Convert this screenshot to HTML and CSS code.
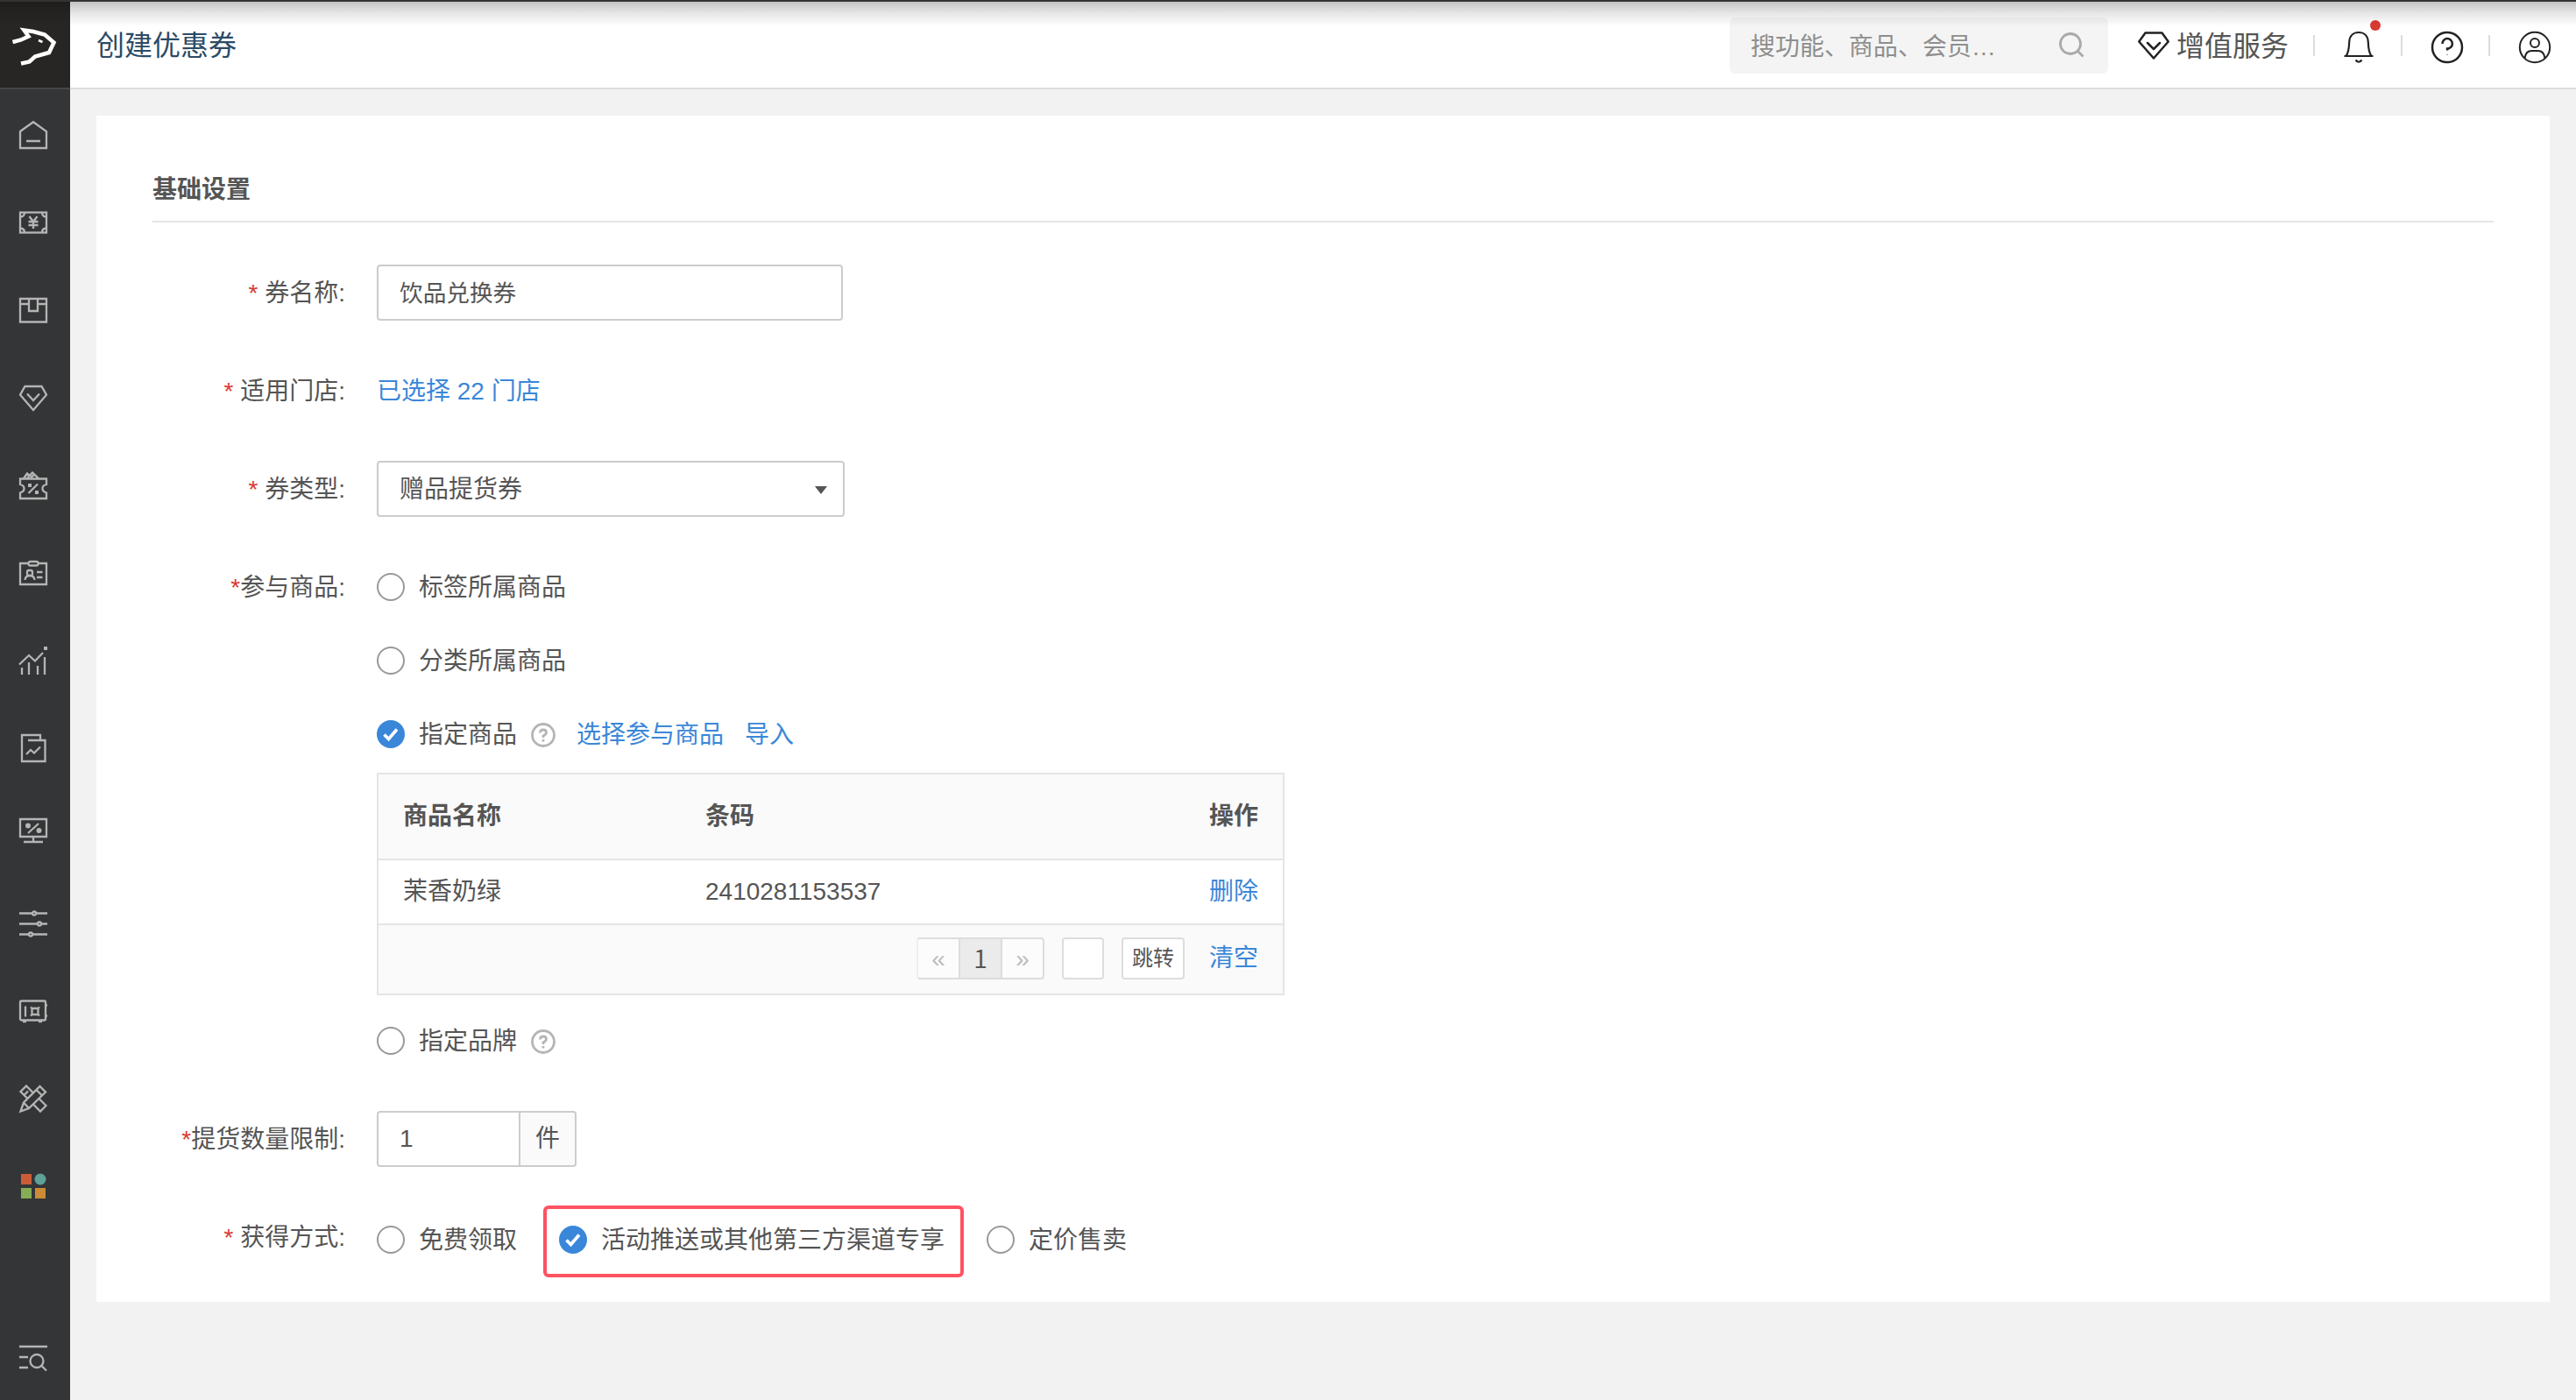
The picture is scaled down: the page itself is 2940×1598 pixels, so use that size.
FILE: index.html
```html
<!DOCTYPE html>
<html lang="zh-CN">
<head>
    <meta charset="UTF-8">
    <meta name="viewport" content="width=device-width, initial-scale=1.0">
    <title>创建优惠券</title>
    <link rel="stylesheet" href="styles.css">
</head>
<body>
    <div class="window-edge"></div>

    <!-- 侧边导航 -->
    <nav class="sidebar">
        <a class="sidebar-logo" href="#">
            <svg width="80" height="98" viewBox="0 2 80 98" fill="none" stroke="#fff" stroke-width="4.5">
                <path d="M14.5 48 L24 45.5 L32.5 41.5 L27.5 34.5 L38 36 L51 39.5 L61.5 48.5 L56 60 L40 64.5 L33.5 70.5 L24 72.5"/>
                <path d="M44 46 L48.5 48" stroke-width="2.5"/>
            </svg>
        </a>
        <a class="nav-item" href="#"><svg class="nav-icon" viewBox="0 0 32 32"><path d="M1 12 L16 1.2 L31 12 V31 H1 Z M8 23 H24"/></svg></a>
        <a class="nav-item" href="#"><svg class="nav-icon" viewBox="0 0 32 32"><rect x="1" y="4.5" width="30" height="23"/><path d="M1 9.5 Q6 9.5 6 4.5 M31 9.5 Q26 9.5 26 4.5 M1 22.5 Q6 22.5 6 27.5 M31 22.5 Q26 22.5 26 27.5 M11.5 9 L16 15 L20.5 9 M16 15 V23 M10.5 15 H21.5 M10.5 19 H21.5"/></svg></a>
        <a class="nav-item" href="#"><svg class="nav-icon" viewBox="0 0 32 32"><path d="M1 3 H31 V29.5 H1 Z M1 9 H11 M21 9 H31 M11 3 V17 H21 V3"/></svg></a>
        <a class="nav-item" href="#"><svg class="nav-icon" viewBox="0 0 32 32"><path d="M6.5 3 H25.5 L31 12.7 L16 30 L1 12.7 Z M9 11.5 L16 19 L23 11.5"/></svg></a>
        <a class="nav-item" href="#"><svg class="nav-icon" viewBox="0 0 32 32"><path d="M1 8.5 H31 V15 Q26.500 16 26.500 19.500 Q26.500 23 31 24.500 V31 H1 V24.500 Q5.500 23 5.500 19.500 Q5.500 16 1 15 Z M10.500 25 L21 14.500 M5 8 L9 2.500 L12 5 M9 8 L15 1.500 L22 8 M13 7 L17 4"/><path class="solid" d="M10 14 h4 v4 h-4 z M18 22 h4 v4 h-4 z"/></svg></a>
        <a class="nav-item" href="#"><svg class="nav-icon" viewBox="0 0 32 32"><path d="M10.5 5 H1 V29 H31 V5 H21.500 M20 15 H26.500 M20 21 H26.500 M6.500 24 Q7 19 12 19 Q17 19 17.500 24"/><rect x="10.500" y="3" width="11" height="4.500" rx="2"/><rect x="9" y="13" width="6" height="6" rx="2"/></svg></a>
        <a class="nav-item" href="#"><svg class="nav-icon" viewBox="0 0 32 32"><path d="M0 20.500 L11 10 L18 16.500 L27 7 M3 24 V32 M11 18 V32 M21 22 V32 M29 12 V32"/><path class="solid" d="M28 0 h4 v4 h-4 z"/></svg></a>
        <a class="nav-item" href="#"><svg class="nav-icon" viewBox="0 0 32 32"><path d="M3 1 H24 V7 H29.500 V31 H3 Z M10 7 H24 M8 23 L13 18 L17 21.500 L24 14.500"/></svg></a>
        <a class="nav-item" href="#"><svg class="nav-icon" viewBox="0 0 32 32"><g transform="translate(0 -7)"><path d="M1 4 H31 V24 H1 Z M16 24 V29 M5 30 H27 M10 20 L22 9"/><circle class="solid" cx="10" cy="11.500" r="3"/><circle class="solid" cx="22.500" cy="17" r="3"/></g></svg></a>
        <a class="nav-item" href="#"><svg class="nav-icon" viewBox="0 0 32 32"><path d="M0 4.500 H15 M19 4.500 H32 M0 16.500 H21 M25 16.500 H32 M0 28.500 H11 M15 28.500 H32"/><circle cx="17" cy="4.500" r="2"/><circle cx="23" cy="16.500" r="2"/><circle cx="13" cy="28.500" r="2"/></svg></a>
        <a class="nav-item" href="#"><svg class="nav-icon" viewBox="0 0 32 32"><g transform="translate(0 -.5)"><rect x="1" y="5" width="29" height="22" rx="1.500"/><path d="M7 11 V23 M14.500 13.500 H21.500 V20.500 H14.500 Z M13 12 L15 14 M23 12 L21 14 M13 22 L15 20 M23 22 L21 20 M30 10 H32 M30 22 H32 M4 28.500 H8 M22 28.500 H26"/></g></svg></a>
        <a class="nav-item" href="#"><svg class="nav-icon" viewBox="0 0 32 32"><path d="M1.500 30.500 L5 20.500 L23.500 2 L30 8.500 L11 27 Z M19.500 6 L26 12.500 M5 20.500 L11 27 M9.500 16 L1.500 8 L8 1.500 L16 9.500 M6 11.500 L10 7.500 M22.500 16 L30.500 24 L24 30.500 L16 22.500"/></svg></a>
        <a class="nav-item" href="#"><svg class="nav-icon apps" viewBox="0 0 32 32"><rect class="app-red" x="2" y="2" width="12" height="12"/><circle class="app-teal" cx="24" cy="8" r="6.500"/><rect class="app-green" x="2" y="18" width="12" height="12"/><rect class="app-orange" x="18" y="18" width="12" height="12"/></svg></a>
        <a class="nav-item nav-bottom" href="#"><svg class="nav-icon" viewBox="0 0 32 32"><path d="M0 3 H32 M0 15 H10 M0 27 H10 M25.500 25 L31 30.500"/><circle cx="20" cy="19.500" r="7.500"/></svg></a>
    </nav>

    <div class="main">
        <header class="header">
            <h1 class="page-title">创建优惠券</h1>
            <div class="search">
                <span>搜功能、商品、会员…</span>
                <svg width="30" height="30" viewBox="0 0 30 30" fill="none" stroke="#a9a9a9" stroke-width="2.8"><circle cx="13" cy="13" r="11.500"/><path d="M21 21 L27.500 27.500"/></svg>
            </div>
            <a class="vas" href="#">
                <svg width="36" height="32" viewBox="0 0 36 32" fill="none" stroke="#222" stroke-width="2.500" stroke-linejoin="round" stroke-linecap="round"><path d="M8.500 1.500 H27.500 L34.700 11.500 L18 30.500 L1.300 11.500 Z M11 13 L18 20 L25 13"/></svg>
                <span>增值服务</span>
            </a>
            <span class="divider"></span>
            <a class="header-icon bell" href="#">
                <svg width="36" height="38" viewBox="0 0 36 38" fill="none" stroke="#222" stroke-width="2.200"><path d="M1.500 29 H34.500 M3.500 29 C6.500 25 7 21 7.200 13 C7.500 5.500 12 2 18 2 C24 2 28.500 5.500 28.800 13 C29 21 29.500 25 32.500 29 M14.500 33.500 Q18 38 21.500 33.500"/></svg>
                <i class="badge-dot"></i>
            </a>
            <span class="divider"></span>
            <a class="header-icon" href="#">
                <svg width="38" height="38" viewBox="0 0 38 38" fill="none" stroke="#222" stroke-width="2.500"><circle cx="19" cy="19" r="17"/><path d="M13.500 15 A5.700 5.700 0 1 1 19 20.500 V22.500"/><circle cx="19" cy="27.500" r=".6" fill="#222" stroke="none"/></svg>
            </a>
            <span class="divider"></span>
            <a class="header-icon" href="#">
                <svg width="38" height="38" viewBox="0 0 38 38" fill="none" stroke="#222" stroke-width="2"><circle cx="19" cy="19" r="17.200"/><circle cx="19" cy="14" r="5"/><path d="M7.500 31.500 Q8.500 23 15.500 23 H22.500 Q29.500 23 30.500 31.500"/></svg>
            </a>
        </header>

        <section class="card">
            <h2 class="card-title">基础设置</h2>

            <form class="form">
                <div class="form-row">
                    <label class="form-label"><em>*</em> 券名称:</label>
                    <input class="text-input name-input" type="text" value="饮品兑换券">
                </div>

                <div class="form-row">
                    <label class="form-label"><em>*</em> 适用门店:</label>
                    <a class="link stores" href="#">已选择 22 门店</a>
                </div>

                <div class="form-row">
                    <label class="form-label"><em>*</em> 券类型:</label>
                    <div class="select"><span>赠品提货券</span><i class="caret"></i></div>
                </div>

                <div class="form-row">
                    <label class="form-label"><em>*</em>参与商品:</label>
                    <div class="goods">
                        <label class="option"><i class="radio"></i>标签所属商品</label>
                        <label class="option"><i class="radio"></i>分类所属商品</label>
                        <div class="option">
                            <i class="radio checked"><svg width="20" height="18" viewBox="0 0 20 18"><path d="M2.500 9.500 L7.500 14.500 L17 3.500"/></svg></i>指定商品
                            <svg class="help" viewBox="0 0 28 28"><circle cx="14" cy="14" r="12.500"/><path d="M10.500 11.500 Q10.500 8 14 8 Q17.500 8 17.500 11 Q17.500 13 14 15 V17 M14 19 V21.500"/></svg>
                            <a class="link pick" href="#">选择参与商品</a>
                            <a class="link" href="#">导入</a>
                        </div>
                        <table class="goods-table">
                            <thead>
                                <tr><th class="col-name">商品名称</th><th>条码</th><th class="col-action">操作</th></tr>
                            </thead>
                            <tbody>
                                <tr><td>茉香奶绿</td><td>2410281153537</td><td class="col-action"><a class="link" href="#">删除</a></td></tr>
                            </tbody>
                            <tfoot>
                                <tr>
                                    <td colspan="3">
                                        <div class="pager">
                                            <span class="page-group"><b class="page-btn">«</b><b class="page-btn current">1</b><b class="page-btn">»</b></span>
                                            <span class="page-input"></span>
                                            <span class="page-jump">跳转</span>
                                            <a class="link" href="#">清空</a>
                                        </div>
                                    </td>
                                </tr>
                            </tfoot>
                        </table>
                        <div class="option">
                            <i class="radio"></i>指定品牌
                            <svg class="help" viewBox="0 0 28 28"><circle cx="14" cy="14" r="12.500"/><path d="M10.500 11.500 Q10.500 8 14 8 Q17.500 8 17.500 11 Q17.500 13 14 15 V17 M14 19 V21.500"/></svg>
                        </div>
                    </div>
                </div>

                <div class="form-row">
                    <label class="form-label"><em>*</em>提货数量限制:</label>
                    <div class="input-group">
                        <input class="text-input count-input" type="text" value="1">
                        <span class="addon">件</span>
                    </div>
                </div>

                <div class="form-row">
                    <label class="form-label"><em>*</em> 获得方式:</label>
                    <div class="channels">
                        <label class="option"><i class="radio"></i>免费领取</label>
                        <label class="option highlighted"><i class="radio checked"><svg width="20" height="18" viewBox="0 0 20 18"><path d="M2.500 9.500 L7.500 14.500 L17 3.500"/></svg></i>活动推送或其他第三方渠道专享</label>
                        <label class="option"><i class="radio"></i>定价售卖</label>
                    </div>
                </div>
            </form>
        </section>
    </div>
</body>
</html>
```

FILE: styles.css
```css
* {
    box-sizing: border-box;
}

body {
    margin: 0;
    height: 1598px;
    display: flex;
    background: #f2f2f2;
    color: #555;
    font-family: "Liberation Sans", "Noto Sans CJK SC", sans-serif;
    font-size: 28px;
    line-height: 40px;
}

a {
    color: inherit;
    text-decoration: none;
}

em, i {
    font-style: normal;
}

svg {
    display: block;
    flex: none;
}

.window-edge {
    position: absolute;
    top: 0;
    left: 0;
    right: 0;
    height: 2px;
    background: #333;
    z-index: 2;
}

/* 顶部阴影 */
.window-edge::after {
    content: "";
    position: absolute;
    top: 2px;
    left: 0;
    right: 0;
    height: 28px;
    background: linear-gradient(rgba(0,0,0,0.23), rgba(0,0,0,0.09) 50%, rgba(0,0,0,0));
}

/* 侧边栏 */
.sidebar {
    width: 80px;
    height: 1598px;
    flex: none;
    display: flex;
    flex-direction: column;
    background: #343537;
}

.sidebar-logo {
    height: 102px;
    flex: none;
    margin-bottom: 2px;
    padding-top: 2px;
    background: #272624;
    border-bottom: 2px solid #434649;
}

.nav-item {
    height: 100px;
    flex: none;
    padding-left: 22px;
    display: flex;
    align-items: center;
}

.nav-bottom {
    height: 96px;
    margin-top: auto;
}

.nav-icon {
    width: 32px;
    height: 32px;
    overflow: visible;
    fill: none;
    stroke: #b4b5b4;
    stroke-width: 2.3;
}

.nav-icon .solid {
    fill: #b4b5b4;
    stroke: none;
}

.nav-icon.apps {
    stroke: none;
}

.app-red { fill: #ca5d38; }
.app-teal { fill: #5fa298; }
.app-green { fill: #86ad54; }
.app-orange { fill: #cb8b37; }

/* 头部 */
.main {
    flex: 1;
}

.header {
    height: 102px;
    padding: 4px 28px 0 30px;
    display: flex;
    align-items: center;
    background: #fff;
    border-bottom: 2px solid #dcdcdc;
}

.page-title {
    margin: 0 auto 0 0;
    font-size: 32px;
    font-weight: normal;
    color: #2b4b66;
}

.search {
    width: 432px;
    height: 64px;
    padding: 0 26px 0 24px;
    display: flex;
    align-items: center;
    justify-content: space-between;
    background: #f4f4f4;
    border-radius: 6px;
    color: #8e8e8e;
}

.search span {
    padding-top: 4px;
}

.vas {
    margin-left: 34px;
    display: flex;
    align-items: center;
    gap: 8px;
    font-size: 32px;
}

.vas span {
    padding-top: 2px;
}

.divider {
    width: 2px;
    height: 24px;
    margin-left: 28px;
    background: #dcdcdc;
}

.header-icon {
    position: relative;
    width: 38px;
    margin-left: 32px;
    padding-top: 4px;
}

.badge-dot {
    position: absolute;
    top: -8px;
    left: 31px;
    width: 12px;
    height: 12px;
    border-radius: 50%;
    background: #d93a34;
}

/* 内容卡片 */
.card {
    height: 1354px;
    margin: 30px 30px 0;
    padding: 62px 64px 0;
    background: #fff;
}

.card-title {
    height: 60px;
    margin: 0 0 48px;
    padding-top: 3px;
    border-bottom: 2px solid #e5e5e5;
    font-size: 28px;
}

.form {
    display: flex;
    flex-direction: column;
    gap: 48px;
}

.form-row {
    min-height: 64px;
    display: flex;
    gap: 36px;
    line-height: 62px;
}

.form-label {
    width: 220px;
    padding-top: 2px;
    text-align: right;
    white-space: nowrap;
}

.form-label em {
    color: #d93a34;
}

.link {
    color: #3a87d9;
}

.stores {
    padding-top: 2px;
}

.text-input {
    height: 64px;
    padding: 0 24px;
    border: 2px solid #ccc;
    border-radius: 4px;
    color: #555;
    font-family: inherit;
    font-size: 28px;
    outline: none;
}

.name-input {
    width: 532px;
    padding-bottom: 4px;
    font-size: 26.67px;
}

.select {
    width: 534px;
    height: 64px;
    padding: 2px 18px 0 24px;
    display: flex;
    align-items: center;
    justify-content: space-between;
    border: 2px solid #ccc;
    border-radius: 4px;
}

.caret {
    border: 7px solid transparent;
    border-top: 9px solid #555;
    border-bottom: 0;
}

.goods {
    display: flex;
    flex-direction: column;
    gap: 20px;
}

.option {
    position: relative;
    height: 64px;
    padding-top: 2px;
    display: flex;
    align-items: center;
    white-space: nowrap;
}

.radio {
    width: 32px;
    height: 32px;
    margin: 0 16px 2px 0;
    flex: none;
    display: flex;
    align-items: center;
    justify-content: center;
    border: 2px solid #999;
    border-radius: 50%;
}

.radio.checked {
    border: none;
    background: #3a87d9;
}

.radio path {
    fill: none;
    stroke: #fff;
    stroke-width: 3.6;
}

.help {
    width: 28px;
    height: 28px;
    margin-left: 16px;
    fill: none;
    stroke: #b5b5b5;
    stroke-width: 2.8;
}

.pick {
    margin: 0 24px;
}

.goods-table {
    width: 1036px;
    margin-top: -8px;
    border: 2px solid #e5e5e5;
    border-spacing: 0;
    table-layout: fixed;
    line-height: 40px;
}

.goods-table th,
.goods-table td {
    padding: 0 28px;
    text-align: left;
}

.goods-table th {
    height: 98px;
    background: #fafafa;
    border-bottom: 2px solid #e5e5e5;
}

.goods-table .col-name {
    width: 345px;
}

.goods-table .col-action {
    text-align: right;
}

.goods-table tbody td {
    height: 74px;
    border-bottom: 2px solid #e5e5e5;
}

.goods-table tfoot td {
    height: 78px;
    padding-bottom: 2px;
    background: #fafafa;
}

/* 分页 */
.pager {
    display: flex;
    align-items: center;
    justify-content: flex-end;
}

.page-group,
.page-input,
.page-jump {
    height: 48px;
    margin-right: 20px;
    display: flex;
    border: 2px solid #ddd;
    border-radius: 4px;
    background: #fff;
}

.page-group {
    width: 146px;
    overflow: hidden;
    border-left-color: #eee;
    background: #fcfcfc;
}

.page-btn {
    flex: 1;
    line-height: 46px;
    text-align: center;
    font-weight: normal;
    color: #bbb;
}

.page-btn.current {
    flex: none;
    width: 50px;
    line-height: 42px;
    border: 2px solid #ddd;
    border-width: 0 2px;
    background: #ebebeb;
    color: #555;
    font-family: "Noto Sans CJK SC", sans-serif;
}

.page-input {
    width: 48px;
}

.page-jump {
    width: 72px;
    margin-right: 28px;
    justify-content: center;
    align-items: center;
    font-size: 24px;
}

.input-group {
    display: flex;
}

.count-input {
    width: 164px;
    border-radius: 4px 0 0 4px;
}

.addon {
    width: 64px;
    height: 64px;
    border: 2px solid #ccc;
    border-left: none;
    border-radius: 0 4px 4px 0;
    background: #fafafa;
    line-height: 60px;
    text-align: center;
}

.channels {
    padding-top: 3px;
    display: flex;
    gap: 48px;
}

/* 红框标注 */
.highlighted::after {
    content: "";
    position: absolute;
    top: -7px;
    left: -18px;
    right: -22px;
    height: 74px;
    border: 4px solid #ff5262;
    border-radius: 6px;
}
```
